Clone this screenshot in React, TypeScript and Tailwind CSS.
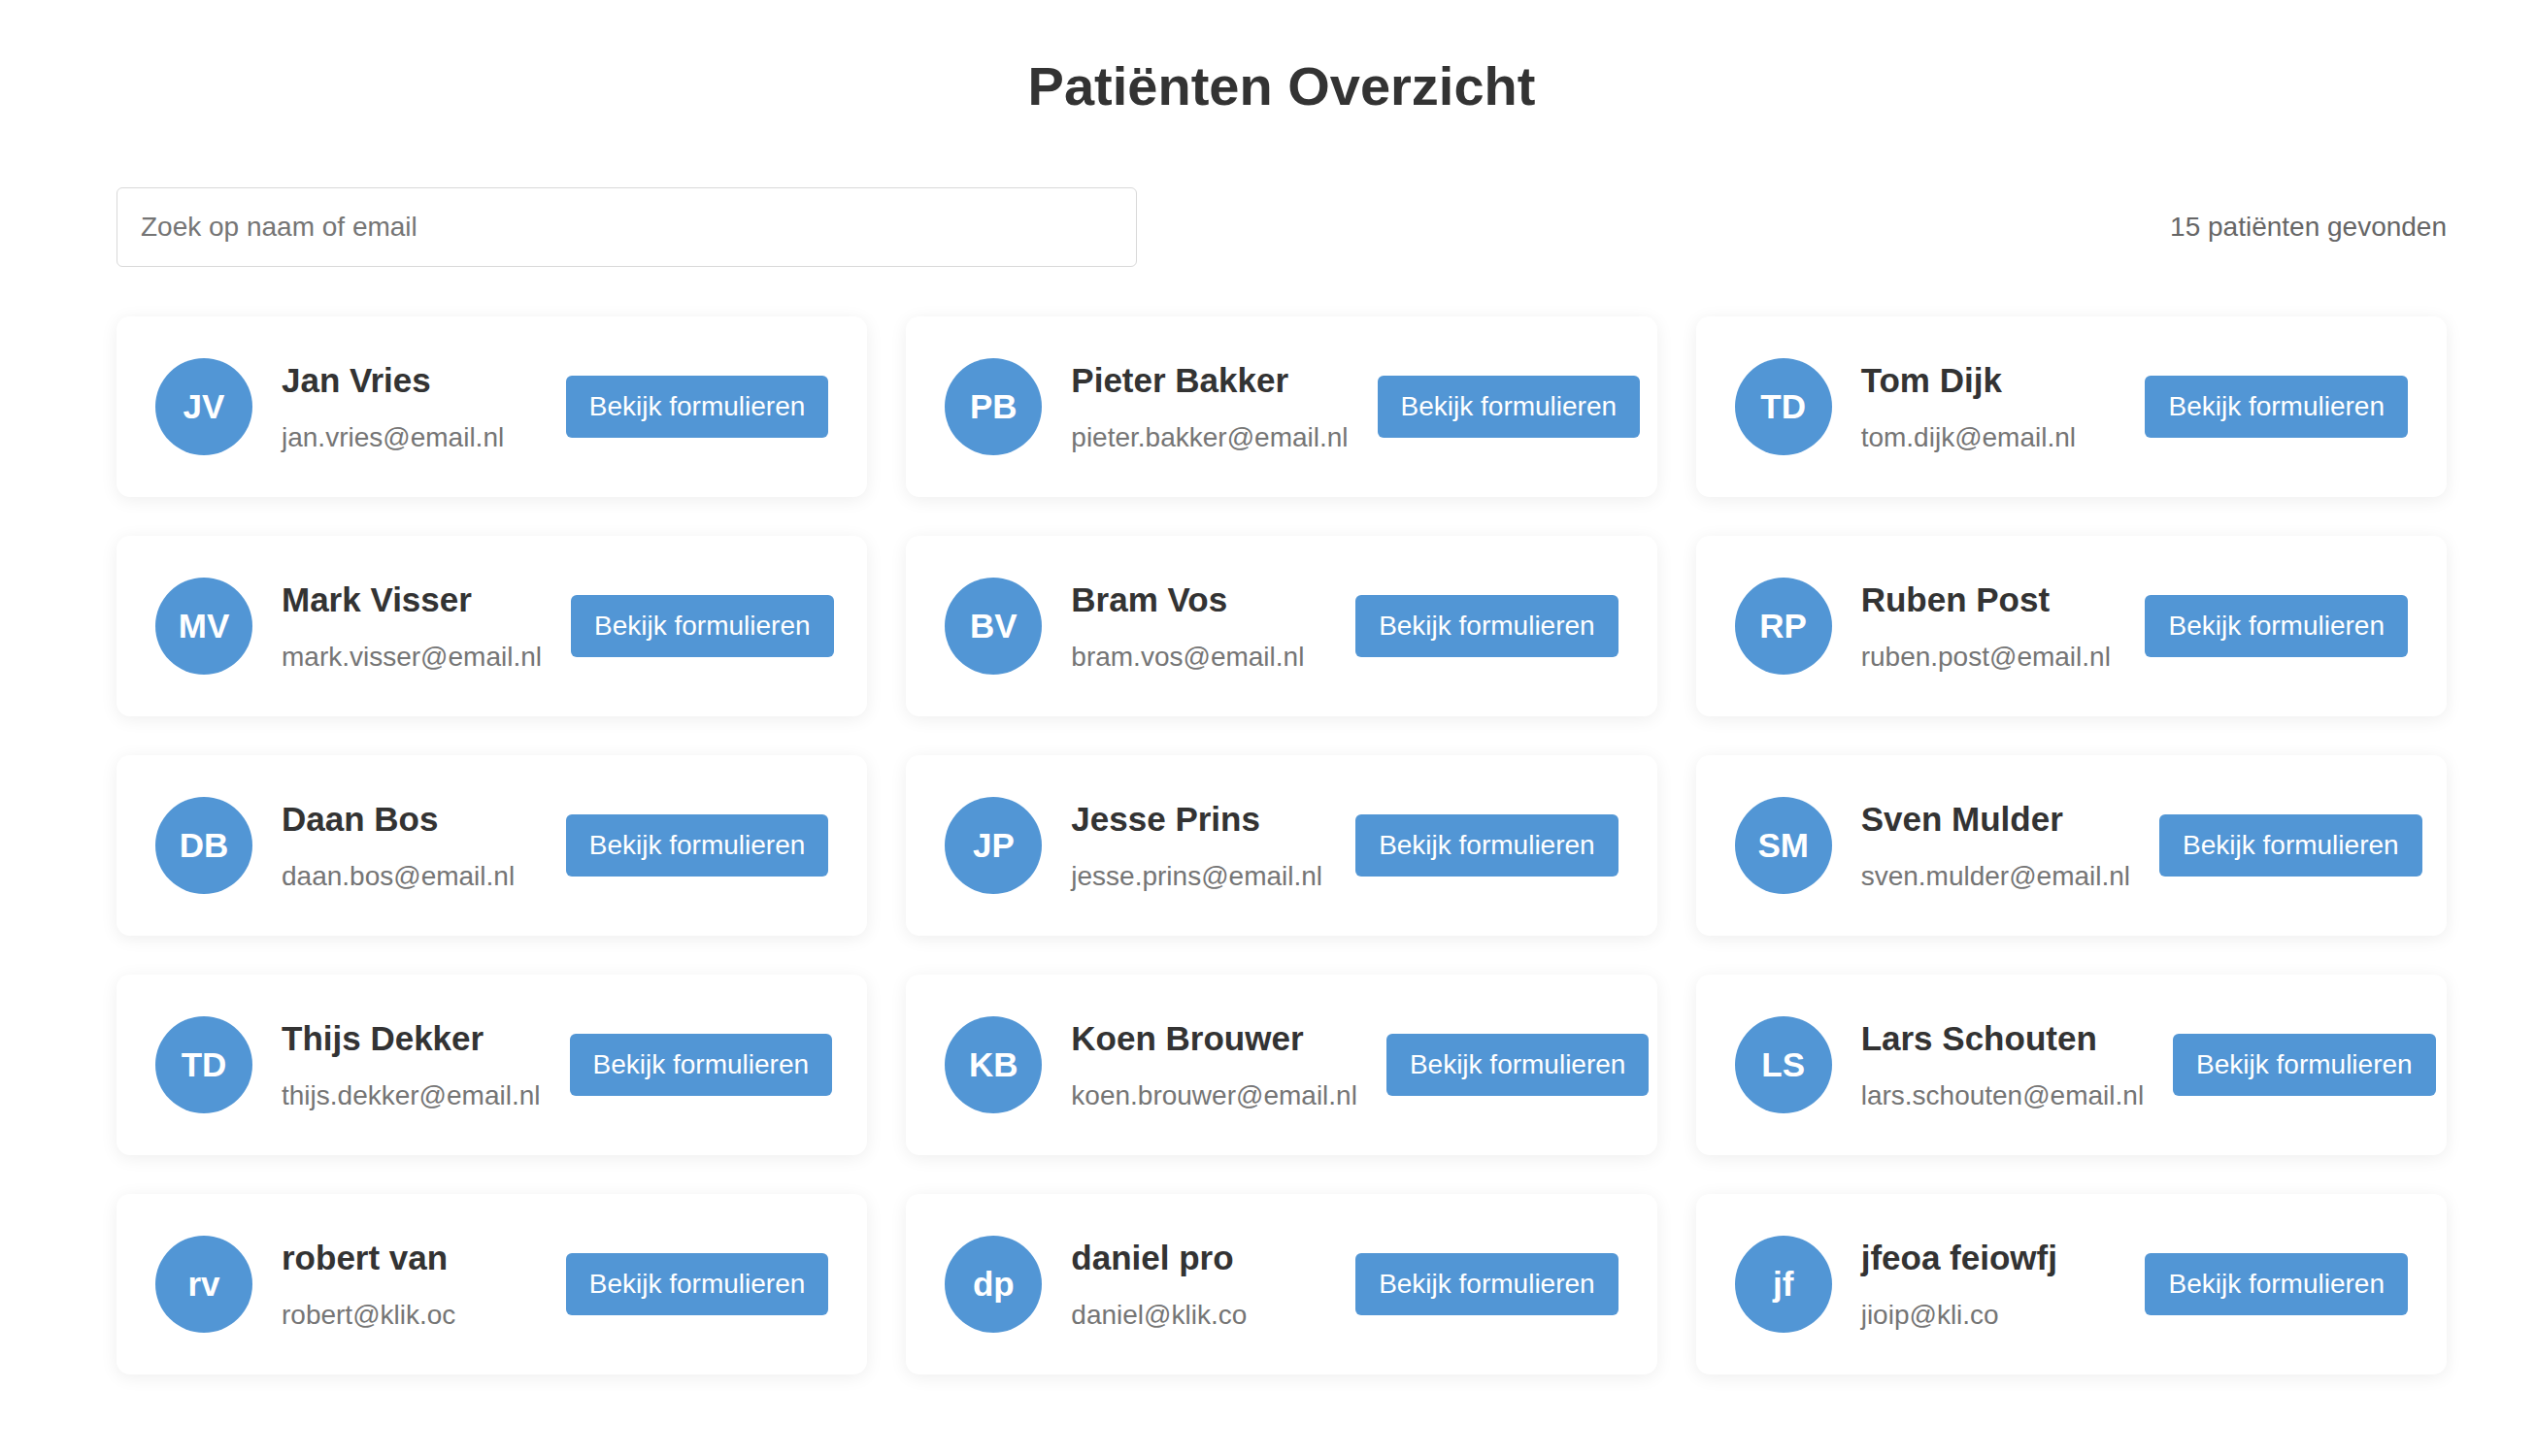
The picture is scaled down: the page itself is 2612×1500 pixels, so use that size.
import React from 'react';

type Patient = { initials: string; name: string; email: string };

const PATIENTS: Patient[] = [
  { initials: 'JV', name: 'Jan Vries', email: 'jan.vries@email.nl' },
  { initials: 'PB', name: 'Pieter Bakker', email: 'pieter.bakker@email.nl' },
  { initials: 'TD', name: 'Tom Dijk', email: 'tom.dijk@email.nl' },
  { initials: 'MV', name: 'Mark Visser', email: 'mark.visser@email.nl' },
  { initials: 'BV', name: 'Bram Vos', email: 'bram.vos@email.nl' },
  { initials: 'RP', name: 'Ruben Post', email: 'ruben.post@email.nl' },
  { initials: 'DB', name: 'Daan Bos', email: 'daan.bos@email.nl' },
  { initials: 'JP', name: 'Jesse Prins', email: 'jesse.prins@email.nl' },
  { initials: 'SM', name: 'Sven Mulder', email: 'sven.mulder@email.nl' },
  { initials: 'TD', name: 'Thijs Dekker', email: 'thijs.dekker@email.nl' },
  { initials: 'KB', name: 'Koen Brouwer', email: 'koen.brouwer@email.nl' },
  { initials: 'LS', name: 'Lars Schouten', email: 'lars.schouten@email.nl' },
  { initials: 'rv', name: 'robert van', email: 'robert@klik.oc' },
  { initials: 'dp', name: 'daniel pro', email: 'daniel@klik.co' },
  { initials: 'jf', name: 'jfeoa feiowfj', email: 'jioip@kli.co' },
];

const PatientCard: React.FC<{ patient: Patient }> = ({ patient }) => (
  <div className="flex items-center bg-white rounded-[14px] px-[40px] py-[43px] shadow-[0_3px_18px_rgba(0,0,0,0.07)]">
    {/* Avatar */}
    <div className="w-[100px] h-[100px] shrink-0 rounded-full bg-[#5296d5] flex items-center justify-center text-white font-bold text-[35px] leading-[1.15]">
      {patient.initials}
    </div>

    {/* Name + email */}
    <div className="flex-1 ml-[30px] whitespace-nowrap">
      <h3 className="text-[35px] font-bold text-[#333] leading-[1.15] mb-[23px]">{patient.name}</h3>
      <p className="text-[28px] text-[#757575] leading-[1.15]">{patient.email}</p>
    </div>

    <button className="ml-[30px] shrink-0 whitespace-nowrap h-[64px] px-[24px] rounded-[6px] bg-[#5296d5] text-white text-[28px] leading-[1.15]">
      Bekijk formulieren
    </button>
  </div>
);

const App: React.FC = () => {
  return (
    <div className="min-h-[1500px] bg-white font-['Liberation_Sans',Arial,sans-serif]">
      <div className="w-[2400px] ml-[120px] pt-[57px] pb-[84px]">
        <h1 className="text-center text-[56px] font-bold text-[#333] leading-[1.15]">Patiënten Overzicht</h1>

        {/* Search bar */}
        <div className="flex items-center justify-between mt-[72px]">
          <input
            type="text"
            placeholder="Zoek op naam of email"
            className="w-[1051px] h-[82px] border border-[#d9d9d9] rounded-[6px] px-[24px] text-[28px] text-[#333] placeholder:text-[#757575] outline-none"
          />
          <span className="text-[28px] text-[#666] leading-[1.15]">15 patiënten gevonden</span>
        </div>

        {/* Cards */}
        <div className="grid grid-cols-3 gap-[40px] mt-[51px]">
          {PATIENTS.map((p, i) => (
            <PatientCard key={i} patient={p} />
          ))}
        </div>
      </div>
    </div>
  );
};

export default App;
